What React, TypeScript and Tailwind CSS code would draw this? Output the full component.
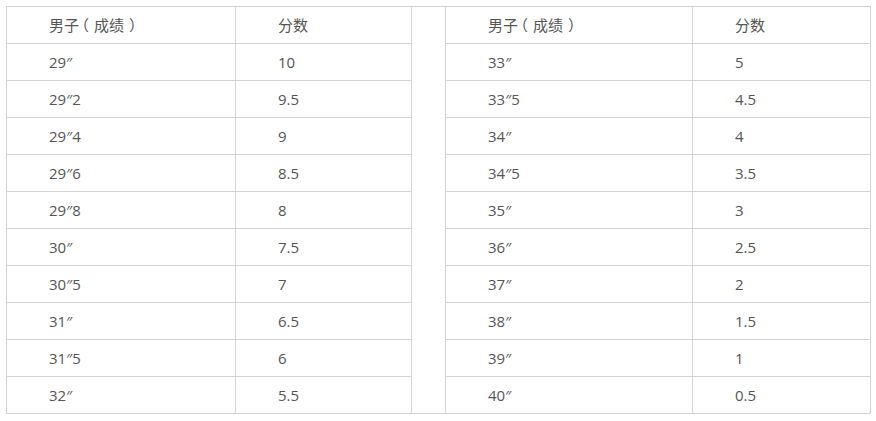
const left = [
  ["29″", "10"],
  ["29″2", "9.5"],
  ["29″4", "9"],
  ["29″6", "8.5"],
  ["29″8", "8"],
  ["30″", "7.5"],
  ["30″5", "7"],
  ["31″", "6.5"],
  ["31″5", "6"],
  ["32″", "5.5"],
]

const right = [
  ["33″", "5"],
  ["33″5", "4.5"],
  ["34″", "4"],
  ["34″5", "3.5"],
  ["35″", "3"],
  ["36″", "2.5"],
  ["37″", "2"],
  ["38″", "1.5"],
  ["39″", "1"],
  ["40″", "0.5"],
]

const cell = "h-[37px] border border-[#d3d3d3] pl-[42px] p-0 align-middle"

// full-width parens sit at the edge of the em box in Noto CJK; centre them like the reference
function Head() {
  return (
    <>
      男子<span className="relative -left-[5px]">（</span>成绩<span className="relative left-[5px]">）</span>
    </>
  )
}

export default function App() {
  return (
    <div className="w-[876px] h-[421px] bg-white pt-[6px] pl-[6px] font-['Open_Sans','Noto_Sans_CJK_SC',sans-serif] text-[15px] text-[#555]">
      <table className="table-fixed border-collapse w-[864px]">
        <colgroup>
          <col className="w-[229px]" />
          <col className="w-[176px]" />
          <col className="w-[34px]" />
          <col className="w-[247px]" />
          <col className="w-[178px]" />
        </colgroup>
        <tbody>
          <tr>
            <td className={cell}><Head /></td>
            <td className={cell}>分数</td>
            <td rowSpan={11} className="border border-[#d3d3d3]"></td>
            <td className={cell}><Head /></td>
            <td className={cell}>分数</td>
          </tr>
          {left.map((row, i) => (
            <tr key={i}>
              <td className={cell}>{row[0]}</td>
              <td className={cell}>{row[1]}</td>
              <td className={cell}>{right[i][0]}</td>
              <td className={cell}>{right[i][1]}</td>
            </tr>
          ))}
        </tbody>
      </table>
    </div>
  )
}
